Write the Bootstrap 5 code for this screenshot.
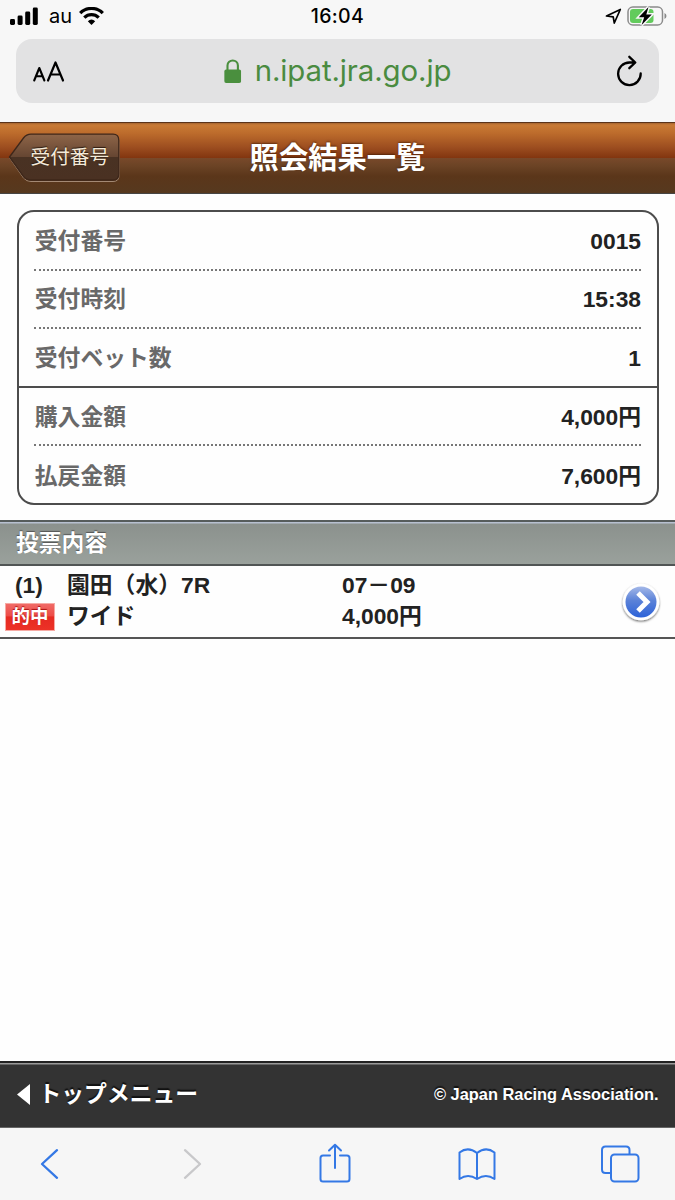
<!DOCTYPE html>
<html lang="ja">
<head>
<meta charset="utf-8">
<meta name="viewport" content="width=device-width, initial-scale=1">
<title>照会結果一覧</title>
<link href="https://cdn.jsdelivr.net/npm/bootstrap@5.3.0/dist/css/bootstrap.min.css" rel="stylesheet">
<style>
body{font-family:"Liberation Sans","Noto Sans CJK JP",sans-serif;font-size:22.8px;font-weight:700;line-height:32px;color:#222;background:#fefefe;height:1200px;overflow:hidden}
svg{display:block;flex:none}
.sf{font-family:Inter,"Liberation Sans",sans-serif;font-weight:400;color:#000}
.chrome-top{height:122px;background:#f7f7f7}
.status{height:39px;padding:0 8px 7px 10px;font-size:20px}
.clock{font-size:19.5px;font-weight:500;letter-spacing:.35px}
.address{height:64px;margin:0 16px;padding:0 16px 0 16px;border-radius:16px;background:#e2e2e3}
.url{font-size:29.4px;color:#4a8b40;letter-spacing:-.1px}
.title-bar{height:72px;border-top:1px solid #5b3319;border-bottom:1px solid #464544;background:linear-gradient(#a5642f 0,#c97a35 2px,#bd6c2c 10px,#9b4c1f 25px,#82350f 35px,#79492a 35px,#6b4325 43px,#5b361a 53px,#56391f 100%)}
.title-text{font-size:29.3px;color:#fff;text-shadow:0 -1px 2px rgba(50,20,0,.6)}
.back{left:8px;top:10px;width:113px;height:50px}
.back-label{position:relative;font-size:19.7px;font-weight:400;padding:0 0 3px 22.5px;color:#f4ead9;text-shadow:0 -1px 1px #2b190d}
.summary{margin:16px 16.5px 0 16.5px;height:295px;border:2px solid #4c4c4c;border-radius:17px;padding:0}
.srow{height:58.6px;margin:0 15.5px;padding-top:1px}
.srow.dots{border-bottom:2px dotted #777}
.srow.full{margin:0;padding:1px 15.5px 0;border-bottom:2px solid #4d4d4d}
.srow dt{color:#696969;padding-left:.8px}
.section-title{height:46px;margin-top:15px;padding:0 16px;color:#fff;border-top:2px solid #565c5c;border-bottom:2px solid #515555;background:linear-gradient(#b7c0d0 0,#b7c0d0 1px,#8b918d 2px,#9aa19c 100%);text-shadow:0 -1.5px 1px #555}
.bet{height:73px;border-bottom:2px solid #555;line-height:31px;padding:4px 13px 0 0}
.bet-no{width:67px}
.bet-race{width:275px}
.hit{width:50px;height:28px;margin:2px 0 0 5px;font-size:18.5px;line-height:26px;color:#fff;border:1px solid #f6aaa4;background:linear-gradient(#f06a66 0,#ed4c47 45%,#e62a22 50%,#ec3227 100%);text-shadow:0 -1px 1px #a11}
.foot{height:67px;padding:0 16.5px 2px;color:#fff;background:#333;border-top:2px solid #222;border-bottom:1px solid #666;box-shadow:inset 0 1.5px #999;text-shadow:0 -2px 1px #111}
.copy{font-size:16.4px}
.tools{height:72px;background:#f6f6f6;padding-top:15px;margin:0 -16.3px 0 -21.8px}
.tools svg{margin:0 auto}
</style>
</head>
<body class="d-flex flex-column">
<div class="chrome-top sf flex-shrink-0">
  <div class="status position-relative d-flex align-items-center">
    <svg width="28" height="18" viewBox="0 0 28 18"><rect x="0" y="12" width="5" height="6" rx="1.4"/><rect x="7.6" y="8.5" width="5" height="9.5" rx="1.4"/><rect x="15.2" y="4.5" width="5" height="13.5" rx="1.4"/><rect x="22.8" y="0.5" width="5" height="17.5" rx="1.4"/></svg>
    <span style="margin-left:11px">au</span>
    <svg style="margin-left:7px" width="25" height="18" viewBox="0 0 25 18" fill="none" stroke="#000" stroke-width="3.3"><path d="M1.2 6.1C7.500-.1 17.500-.1 23.800 6.100M5.300 10.600C9.400 6.700 15.600 6.700 19.700 10.600"/><path d="M8.800 14.300Q12.500 10.800 16.200 14.300L12.500 18Z" fill="#000" stroke="none"/></svg>
    <span class="clock position-absolute start-50 translate-middle-x">16:04</span>
    <svg class="ms-auto" width="17" height="17" viewBox="0 0 17 17" fill="none" stroke="#000" stroke-width="1.700" stroke-linejoin="round"><path d="M15.300 1.500 9.300 15 8.200 8.800 1.500 8Z"/></svg>
    <svg style="margin-left:5px" width="40" height="20" viewBox="0 0 40 20"><rect x="1" y="1" width="34.5" height="18" rx="4.8" fill="none" stroke="#8b8b8b" stroke-width="1.5"/><path d="M37.5 7q2 1 2 3t-2 3z" fill="#888"/><rect x="3" y="3" width="23.5" height="14" rx="3" fill="#62cb5c"/><path d="M21.5 1 11.8 11.3h5.4L14.6 19 24.8 8.5h-5.5Z" fill="#000" stroke="#f7f7f7" stroke-width="3" paint-order="stroke"/></svg>
  </div>
  <div class="address position-relative d-flex align-items-center justify-content-between">
    <svg width="33" height="22" viewBox="0 0 33 22" fill="none" stroke="#000" stroke-linecap="round" stroke-linejoin="round"><path d="M2.200 20.500 7.300 8 12.400 20.500M4 16.300h6.600" stroke-width="2.100"/><path d="M16 20.500 23.500 2.500 31 20.500M18.600 14.500h9.800" stroke-width="2.200"/></svg>
    <div class="position-absolute start-50 translate-middle-x d-flex align-items-center">
      <svg style="margin-right:14px" width="17" height="25" viewBox="0 0 17 25"><rect x="0" y="10.5" width="17" height="13.5" rx="2" fill="#4a8f3e"/><path d="M3.3 11V6.5C3.3-.2 13.7-.2 13.7 6.5V11" fill="none" stroke="#4a8f3e" stroke-width="2.1"/></svg>
      <span class="url text-nowrap">n.ipat.jra.go.jp</span>
    </div>
    <svg width="28" height="32" viewBox="0 0 28 32" fill="none" stroke="#000" stroke-width="2.3" stroke-linecap="round" stroke-linejoin="round"><path d="M25.7 18.5A11.3 11.3 0 1 1 14.5 7.5H20M14.3 1.8 20.3 7.5 14.3 13.2"/></svg>
  </div>
</div>
<header class="title-bar position-relative d-flex align-items-center justify-content-center flex-shrink-0">
  <a class="back position-absolute d-flex align-items-center text-decoration-none">
    <svg class="position-absolute top-0 start-0" width="113" height="50" viewBox="0 0 113 50"><defs><linearGradient id="bk" x2="0" y2="1"><stop stop-color="#8e6548"/><stop offset=".49" stop-color="#664632"/><stop offset=".5" stop-color="#493223"/><stop offset="1" stop-color="#4a3122"/></linearGradient></defs><path d="M2 24 15.500 5Q18.500 1.200 23 1.200H105Q111 1.200 111 7.200V41Q111 47 105 47H23Q18.500 47 15.500 43.500Z" transform="translate(0 1.500)" fill="none" stroke="#a38974"/><path d="M1.500 24 15.500 5Q18.500 1.200 23 1.200H105Q110.800 1.200 110.800 7.200V41Q110.800 47 105 47H23Q18.500 47 15.500 43.500Z" fill="url(#bk)" stroke="#3e271a" stroke-width="1.300"/></svg>
    <span class="back-label">受付番号</span>
  </a>
  <h1 class="title-text m-0 fw-bold">照会結果一覧</h1>
</header>
<main class="flex-grow-1">
  <dl class="summary mb-0">
    <div class="srow dots d-flex align-items-center justify-content-between"><dt>受付番号</dt><dd class="m-0">0015</dd></div>
    <div class="srow dots d-flex align-items-center justify-content-between"><dt>受付時刻</dt><dd class="m-0">15:38</dd></div>
    <div class="srow full d-flex align-items-center justify-content-between"><dt>受付ベット数</dt><dd class="m-0">1</dd></div>
    <div class="srow dots d-flex align-items-center justify-content-between"><dt>購入金額</dt><dd class="m-0">4,000円</dd></div>
    <div class="srow d-flex align-items-center justify-content-between"><dt>払戻金額</dt><dd class="m-0">7,600円</dd></div>
  </dl>
  <div class="section-title d-flex align-items-center">投票内容</div>
  <div class="bet d-flex">
    <div class="bet-no"><div style="padding-left:15px">(1)</div><div class="hit text-center">的中</div></div>
    <div class="bet-race">園田（水）7R<br>ワイド</div>
    <div>07－09<br>4,000円</div>
    <svg class="ms-auto" style="margin-top:11px" width="42" height="44" viewBox="0 0 42 44"><defs><linearGradient id="ball" x2="0" y2="1"><stop stop-color="#a4b8e8"/><stop offset=".45" stop-color="#5b82d8"/><stop offset="1" stop-color="#2c62d8"/></linearGradient><filter id="sh" x="-20%" y="-20%" width="140%" height="140%"><feDropShadow dx="0" dy="1.200" stdDeviation="1.200" flood-opacity=".6"/></filter></defs><circle cx="21" cy="21" r="18.300" fill="#fff" filter="url(#sh)"/><circle cx="21" cy="21" r="15.500" fill="url(#ball)"/><path d="M18 12 27 21 18 30" fill="none" stroke="#fff" stroke-width="5"/></svg>
  </div>
</main>
<footer class="foot d-flex align-items-center justify-content-between flex-shrink-0">
  <div class="d-flex align-items-center"><svg width="13" height="21" viewBox="0 0 13 21"><path d="M0 10.500 13 0V21Z" fill="#fff"/></svg><span style="margin-left:9px">トップメニュー</span></div>
  <span class="copy">© Japan Racing Association.</span>
</footer>
<nav class="tools d-flex flex-shrink-0">
  <div class="flex-fill w-25"><svg width="21" height="44" viewBox="0 0 21 44" fill="none" stroke="#3478e5" stroke-width="2.300" stroke-linecap="round" stroke-linejoin="round"><path d="M18 7.200 3 21 18 34.800"/></svg></div>
  <div class="flex-fill w-25"><svg width="21" height="44" viewBox="0 0 21 44" fill="none" stroke="#c8c8ca" stroke-width="2.300" stroke-linecap="round" stroke-linejoin="round"><path d="M3 7.200 18 21 3 34.800"/></svg></div>
  <div class="flex-fill w-25"><svg width="32" height="44" viewBox="0 0 32 44" fill="none" stroke="#3478e5" stroke-width="2" stroke-linecap="round" stroke-linejoin="round"><path d="M11 12.500H4Q1.500 12.500 1.500 15V36Q1.500 38.500 4 38.500H28Q30.500 38.500 30.500 36V15Q30.500 12.500 28 12.500H21M16 25V2M10 7.500 16 1.700 22 7.500"/></svg></div>
  <div class="flex-fill w-25"><svg width="38" height="44" viewBox="0 0 38 44" fill="none" stroke="#3478e5" stroke-width="2" stroke-linejoin="round"><path d="M19 10Q10 3 1.500 9.500V36Q10 30 19 36Q28 30 36.500 36V9.500Q28 3 19 10V36"/></svg></div>
  <div class="flex-fill w-25"><svg width="40" height="44" viewBox="0 0 40 44" fill="none" stroke="#3478e5" stroke-width="2"><rect x="11" y="11.500" width="27.500" height="27" rx="3.500"/><path d="M11 30H5.500Q2 30 2 26.500V7Q2 3.500 5.500 3.500H26Q29.500 3.500 29.500 7V11.500"/></svg></div>
</nav>
<script src="https://cdn.jsdelivr.net/npm/bootstrap@5.3.0/dist/js/bootstrap.bundle.min.js"></script>
</body>
</html>
